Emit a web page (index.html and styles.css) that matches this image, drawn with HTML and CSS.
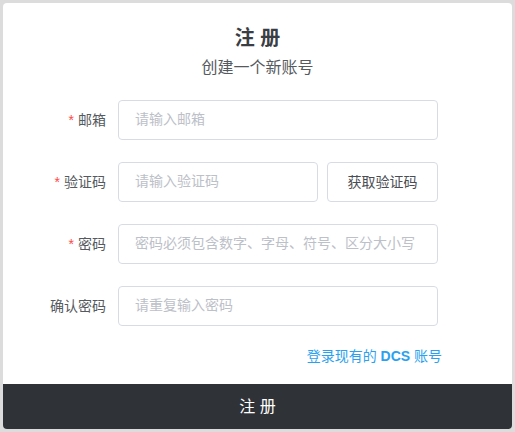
FILE: index.html
```html
<!DOCTYPE html>
<html lang="zh-CN">
<head>
    <meta charset="UTF-8">
    <meta name="viewport" content="width=device-width, initial-scale=1.0">
    <title>注册</title>
    <link rel="stylesheet" href="styles.css">
</head>
<body>

    <div class="register-card">
        <div class="register-body">
            <h1 class="title">注 册</h1>
            <p class="subtitle">创建一个新账号</p>

            <form class="register-form">
                <div class="form-item">
                    <label class="form-label required">邮箱</label>
                    <input type="text" class="form-input" placeholder="请输入邮箱">
                </div>

                <div class="form-item">
                    <label class="form-label required">验证码</label>
                    <div class="code-group">
                        <input type="text" class="form-input code-input" placeholder="请输入验证码">
                        <button type="button" class="code-button">获取验证码</button>
                    </div>
                </div>

                <div class="form-item">
                    <label class="form-label required">密码</label>
                    <input type="password" class="form-input" placeholder="密码必须包含数字、字母、符号、区分大小写">
                </div>

                <div class="form-item">
                    <label class="form-label">确认密码</label>
                    <input type="password" class="form-input" placeholder="请重复输入密码">
                </div>
            </form>

            <div class="login-link">
                <a href="#">登录现有的 <b>DCS</b> 账号</a>
            </div>
        </div>

        <button class="submit-button">注 册</button>
    </div>

</body>
</html>
```

FILE: styles.css
```css
body {
    margin: 0;
    padding: 3px;
    background-color: #dcdcdc;
    font-family: "Liberation Sans", "Noto Sans CJK SC", sans-serif;
}

.register-card {
    height: 426px;
    background-color: #fff;
    border-radius: 4px;
    overflow: hidden;
    display: flex;
    flex-direction: column;
}

.register-body {
    flex: 1;
    padding-top: 21px;
}

.title {
    margin: 0;
    font-size: 20px;
    line-height: 28px;
    font-weight: bold;
    color: #3a3e44;
    text-align: center;
}

.subtitle {
    margin: 4px 0 0;
    font-size: 16px;
    line-height: 24px;
    color: #555a60;
    text-align: center;
}

.register-form {
    margin-top: 20px;
}

.form-item {
    display: flex;
    align-items: center;
    margin-bottom: 22px;
}

.form-item:last-child {
    margin-bottom: 0;
}

.form-label {
    width: 103px;
    padding: 0 12px 3px 0;
    text-align: right;
    font-size: 14px;
    color: #555a60;
}

.form-label.required::before {
    content: "*";
    color: #ff4949;
    margin-right: 4px;
}

.form-input {
    box-sizing: border-box;
    width: 320px;
    height: 40px;
    padding: 0 16px 3px;
    border: 1px solid #d8dbe3;
    border-radius: 4px;
    font-family: inherit;
    font-size: 14px;
    color: #48576a;
    outline: none;
}

.form-input::placeholder {
    color: #bcc0c8;
}

.code-group {
    display: flex;
    gap: 9px;
}

.form-input.code-input {
    width: 200px;
}

.code-button {
    box-sizing: border-box;
    width: 111px;
    height: 40px;
    padding-bottom: 3px;
    background-color: #fff;
    border: 1px solid #d8dbe3;
    border-radius: 4px;
    font-family: inherit;
    font-size: 14px;
    color: #4a4e54;
    cursor: pointer;
}

.login-link {
    margin-top: 20px;
    padding-right: 70px;
    text-align: right;
    font-size: 14px;
    line-height: 20px;
}

.login-link a {
    color: #2aa1f0;
    text-decoration: none;
}

.submit-button {
    height: 45px;
    padding-bottom: 4px;
    border: none;
    background-color: #2f3337;
    color: #fff;
    font-family: inherit;
    font-size: 16px;
    cursor: pointer;
}
```
